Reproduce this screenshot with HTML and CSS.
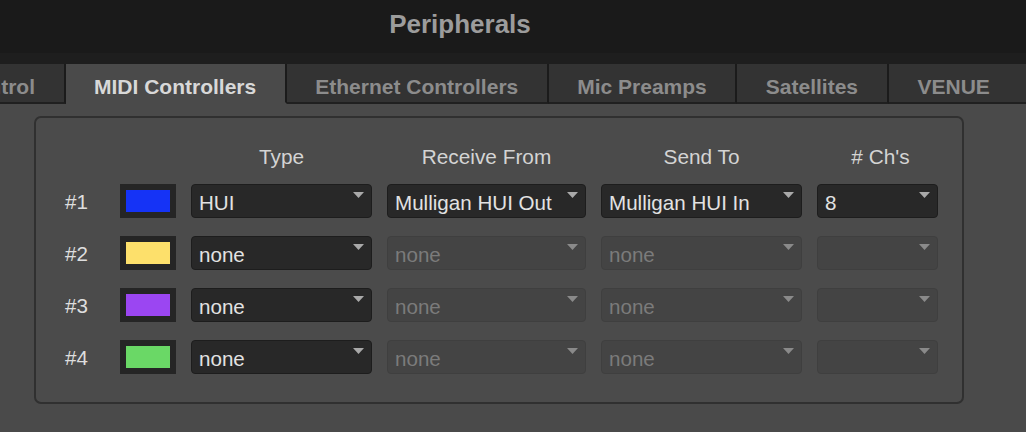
FILE: index.html
```html
<!DOCTYPE html>
<html>
<head>
<meta charset="utf-8">
<title>Peripherals</title>
<link rel="stylesheet" href="styles.css">
</head>
<body>
<div class="window">
  <div class="titlebar">Peripherals</div>
  <div class="tabbar">
    <div class="tabs">
      <div class="tab">Machine Control</div>
      <div class="tab active">MIDI Controllers</div>
      <div class="tab">Ethernet Controllers</div>
      <div class="tab">Mic Preamps</div>
      <div class="tab">Satellites</div>
      <div class="tab last">VENUE</div>
    </div>
  </div>
  <div class="content">
    <div class="panel">
      <div class="grid">
        <div class="hdr"></div>
        <div class="hdr"></div>
        <div class="hdr">Type</div>
        <div class="hdr">Receive From</div>
        <div class="hdr">Send To</div>
        <div class="hdr ch"># Ch's</div>

        <div class="num">#1</div>
        <div class="swatch"><div class="chip blue"></div></div>
        <div class="dd"><span class="val">HUI</span><svg class="arrow" viewBox="0 0 11 6"><polygon points="0,0 11,0 5.5,6"/></svg></div>
        <div class="dd"><span class="val">Mulligan HUI Out</span><svg class="arrow" viewBox="0 0 11 6"><polygon points="0,0 11,0 5.5,6"/></svg></div>
        <div class="dd"><span class="val">Mulligan HUI In</span><svg class="arrow" viewBox="0 0 11 6"><polygon points="0,0 11,0 5.5,6"/></svg></div>
        <div class="dd"><span class="val">8</span><svg class="arrow" viewBox="0 0 11 6"><polygon points="0,0 11,0 5.5,6"/></svg></div>

        <div class="num">#2</div>
        <div class="swatch"><div class="chip yellow"></div></div>
        <div class="dd"><span class="val">none</span><svg class="arrow" viewBox="0 0 11 6"><polygon points="0,0 11,0 5.5,6"/></svg></div>
        <div class="dd off"><span class="val">none</span><svg class="arrow" viewBox="0 0 11 6"><polygon points="0,0 11,0 5.5,6"/></svg></div>
        <div class="dd off"><span class="val">none</span><svg class="arrow" viewBox="0 0 11 6"><polygon points="0,0 11,0 5.5,6"/></svg></div>
        <div class="dd off"><span class="val"></span><svg class="arrow" viewBox="0 0 11 6"><polygon points="0,0 11,0 5.5,6"/></svg></div>

        <div class="num">#3</div>
        <div class="swatch"><div class="chip purple"></div></div>
        <div class="dd"><span class="val">none</span><svg class="arrow" viewBox="0 0 11 6"><polygon points="0,0 11,0 5.5,6"/></svg></div>
        <div class="dd off"><span class="val">none</span><svg class="arrow" viewBox="0 0 11 6"><polygon points="0,0 11,0 5.5,6"/></svg></div>
        <div class="dd off"><span class="val">none</span><svg class="arrow" viewBox="0 0 11 6"><polygon points="0,0 11,0 5.5,6"/></svg></div>
        <div class="dd off"><span class="val"></span><svg class="arrow" viewBox="0 0 11 6"><polygon points="0,0 11,0 5.5,6"/></svg></div>

        <div class="num">#4</div>
        <div class="swatch"><div class="chip green"></div></div>
        <div class="dd"><span class="val">none</span><svg class="arrow" viewBox="0 0 11 6"><polygon points="0,0 11,0 5.5,6"/></svg></div>
        <div class="dd off"><span class="val">none</span><svg class="arrow" viewBox="0 0 11 6"><polygon points="0,0 11,0 5.5,6"/></svg></div>
        <div class="dd off"><span class="val">none</span><svg class="arrow" viewBox="0 0 11 6"><polygon points="0,0 11,0 5.5,6"/></svg></div>
        <div class="dd off"><span class="val"></span><svg class="arrow" viewBox="0 0 11 6"><polygon points="0,0 11,0 5.5,6"/></svg></div>
      </div>
    </div>
  </div>
</div>
</body>
</html>
```
FILE: styles.css
```css
* { box-sizing: border-box; }
html, body {
  margin: 0;
  padding: 0;
  background: #4a4a4a;
  width: 1026px;
  height: 432px;
  overflow: hidden;
  font-family: "Liberation Sans", Arial, sans-serif;
}
.window {
  display: flex;
  flex-direction: column;
  height: 432px;
}
.titlebar {
  height: 53px;
  background: #1a1a1a;
  color: #9c9c9c;
  font-weight: bold;
  font-size: 26px;
  line-height: 49px;
  padding-bottom: 4px;
  padding-right: 106px;
  text-align: center;
}
.tabbar {
  background: #1e1e1e;
  padding-top: 11px;
  overflow: hidden;
}
.tabs {
  display: flex;
  margin-left: -158px;
}
.tab {
  flex: none;
  height: 40px;
  padding: 7px 28.5px 0;
  line-height: 31px;
  font-size: 21px;
  font-weight: bold;
  color: #8c8c8c;
  background: #333333;
  border-right: 2px solid #1b1b1b;
  border-bottom: 2px solid #202020;
  white-space: nowrap;
}
.tab.active {
  background: #4a4a4a;
  color: #d8d8d8;
  border-bottom-color: #4a4a4a;
}
.tab.last {
  flex: 1;
  border-right: none;
  padding-right: 0;
  padding-left: 29px;
}
.content {
  flex: 1;
  padding: 12px 0 0 34px;
}
.panel {
  width: 930px;
  height: 288px;
  border: 2px solid #303030;
  border-radius: 7px;
  background: #4b4b4b;
  padding: 28px 0 0 29px;
}
.grid {
  display: grid;
  grid-template-columns: 40px 56px 181px 199px 201px 121px;
  grid-template-rows: 20px repeat(4, 34px);
  column-gap: 15px;
  row-gap: 18px;
}
.hdr {
  font-size: 20.8px;
  line-height: 22px;
  height: 20px;
  color: #d4d4d4;
  text-align: center;
  white-space: nowrap;
}
.hdr.ch { padding-left: 6px; }
.num {
  font-size: 20.6px;
  line-height: 28px;
  padding-top: 4px;
  color: #dedede;
}
.swatch {
  background: #252525;
  padding: 6px;
}
.chip { width: 100%; height: 100%; }
.blue { background: #1533f6; }
.yellow { background: #fde06b; }
.purple { background: #9b46f2; }
.green { background: #6ad866; }
.dd {
  display: flex;
  align-items: flex-start;
  height: 34px;
  border: 1px solid #1d1d1d;
  border-radius: 4px;
  background: #282828;
  padding: 4px 7px 0 7px;
  color: #e2e2e2;
  font-size: 20.6px;
  line-height: 28px;
  white-space: nowrap;
  overflow: hidden;
}
.val { flex: 1; }
.arrow {
  flex: none;
  width: 11px;
  height: 6px;
  margin-top: 3px;
  fill: #a9a9a9;
}
.dd.off {
  background: #444444;
  border-color: #3f3f3f;
  color: #7b7b7b;
}
.dd.off .arrow { fill: #8a8a8a; }
```
